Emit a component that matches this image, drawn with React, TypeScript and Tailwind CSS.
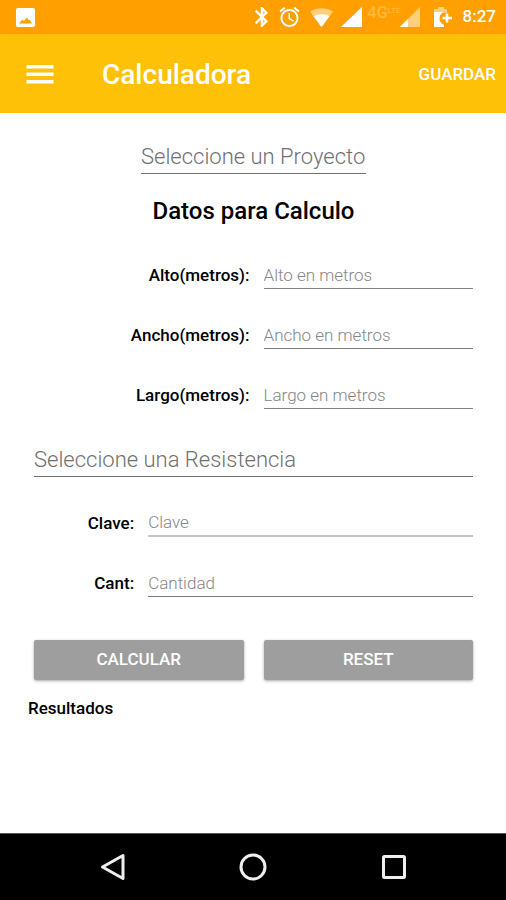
import { useState, type ReactNode } from "react";

interface FieldProps {
  id: string;
  label: string;
  placeholder: string;
  wide?: boolean;
  disabled?: boolean;
  value: string;
  onChange: (id: string, value: string) => void;
}

const Field = ({
  id,
  label,
  placeholder,
  wide,
  disabled,
  value,
  onChange,
}: FieldProps) => (
  <div className="flex items-center gap-3.5">
    <label
      htmlFor={id}
      className="flex-1 text-right text-[17px] leading-6 font-medium text-black"
    >
      {label}
    </label>
    <input
      id={id}
      value={value}
      disabled={disabled}
      placeholder={placeholder}
      onChange={(e) => onChange(id, e.target.value)}
      className={`h-7 min-w-0 bg-transparent text-[17px] leading-6 font-light text-black outline-none placeholder:text-[#868686] ${
        wide ? "w-[74%]" : "w-[calc(50%-10px)]"
      } ${disabled ? "border-b-2 border-[#c4c4c4]" : "border-b border-[#808080]"}`}
    />
  </div>
);

interface PickerProps {
  label: string;
  options: string[];
  className: string;
}

const Picker = ({ label, options, className }: PickerProps) => (
  <select
    aria-label={label}
    defaultValue=""
    className={`h-[33px] appearance-none border-b border-[#707070] bg-transparent text-[22px] leading-8 font-light text-[#707070] outline-none ${className}`}
  >
    <option value="" hidden>
      {label}
    </option>
    {options.map((option) => (
      <option key={option}>{option}</option>
    ))}
  </select>
);

interface ButtonProps {
  children: ReactNode;
  onClick?: () => void;
}

const Button = ({ children, onClick }: ButtonProps) => (
  <button
    type="button"
    onClick={onClick}
    className="h-10 flex-1 rounded-xs bg-[#9e9e9e] text-[17px] font-medium text-white shadow-[0_1px_3px_rgba(0,0,0,0.35)]"
  >
    {children}
  </button>
);

const StatusBar = () => (
  <div className="flex h-[34px] items-center bg-[#ffa000] pr-2.5 pl-4 text-white">
    <svg width="19" height="19" viewBox="0 0 19 19" fill="currentColor">
      <path
        fillRule="evenodd"
        d="M2 0h15a2 2 0 0 1 2 2v15a2 2 0 0 1-2 2H2a2 2 0 0 1-2-2V2a2 2 0 0 1 2-2zM3 15.500h13l-2.500-4-1 .5-1.500-2.500-3 3.500-1.500-1.500z"
      />
    </svg>
    <div className="ml-auto flex items-center">
      <svg width="14" height="20" viewBox="5 2 14 20" fill="currentColor">
        <path
          stroke="currentColor"
          strokeWidth="0.5"
          d="M17.710 7.710L12 2h-1v7.590L6.410 5 5 6.410 10.590 12 5 17.590 6.410 19 11 14.410V22h1l5.710-5.710-4.300-4.290 4.300-4.290zM13 5.830l1.880 1.880L13 9.590V5.830zm1.880 10.460L13 18.170v-3.760l1.880 1.880z"
        />
      </svg>
      <svg
        className="ml-2.5"
        width="21"
        height="20"
        viewBox="2 2 20 20"
        fill="currentColor"
      >
        <path d="M22 5.720l-4.600-3.860-1.290 1.530 4.600 3.860L22 5.720zM7.880 3.390L6.600 1.860 2 5.710l1.290 1.530 4.590-3.850zM12.500 8H11v6l4.750 2.850.75-1.230-4-2.370V8zM12 4c-4.970 0-9 4.030-9 9s4.020 9 9 9c4.970 0 9-4.030 9-9s-4.030-9-9-9zm0 16c-3.870 0-7-3.130-7-7s3.130-7 7-7 7 3.130 7 7-3.130 7-7 7z" />
      </svg>
      <svg className="ml-2.5" width="23" height="19" viewBox="0 0 23 19">
        <path
          fill="#ffcf7d"
          d="M0 3.500C6.500-1 16.500-1 23 3.500L11.500 19z"
        />
        <path fill="#fff" d="M3.500 8.200C8 5.500 15 5.500 19.500 8.200L11.500 19z" />
      </svg>
      <svg className="ml-2" width="21" height="20" viewBox="0 0 21 20">
        <path fill="#fff" d="M21 0v20H0z" />
      </svg>
      <span className="ml-1.5 flex w-8 pb-2 text-base leading-4 font-medium text-[#ffb840]">
        4G
        <span className="text-[8px] leading-3">LTE</span>
      </span>
      <svg width="20" height="20" viewBox="0 0 20 20">
        <path fill="#ffcf7d" d="M20 0v20H0z" />
        <path fill="#fff" d="M8 12v8H0z" />
      </svg>
      <svg className="ml-3.5" width="19" height="20" viewBox="0 0 19 20">
        <path fill="#ffcf7d" d="M4 2V0h6v2h3v4H0V2z" />
        <path
          fill="#fff"
          d="M0 5h9.500c-2.500 1.500-4 3.500-4 6.500s1.500 5 4.500 6.500v2H1a1 1 0 0 1-1-1z"
        />
        <path
          d="M13 6.500v9M8.500 11h9.500"
          stroke="#fff"
          strokeWidth="2.500"
          fill="none"
        />
      </svg>
      <span className="ml-2.5 text-[17px] font-medium">8:27</span>
    </div>
  </div>
);

const NavBar = () => (
  <nav className="flex h-[67px] items-center justify-around border-t border-[#555] bg-black px-[42px] text-[#eee]">
    <button type="button" aria-label="Atrás">
      <svg width="28" height="28" viewBox="0 0 28 28" fill="none">
        <path
          d="M25 2.500v23L4.500 14z"
          stroke="currentColor"
          strokeWidth="3"
          strokeLinejoin="round"
        />
      </svg>
    </button>
    <button type="button" aria-label="Inicio">
      <svg width="28" height="28" viewBox="0 0 28 28" fill="none">
        <circle cx="14" cy="14" r="12" stroke="currentColor" strokeWidth="3" />
      </svg>
    </button>
    <button type="button" aria-label="Recientes">
      <svg width="28" height="28" viewBox="0 0 28 28" fill="none">
        <rect
          x="3.500"
          y="3.500"
          width="21"
          height="21"
          rx="1"
          stroke="currentColor"
          strokeWidth="3"
        />
      </svg>
    </button>
  </nav>
);

const emptyValues: Record<string, string> = {
  alto: "",
  ancho: "",
  largo: "",
  clave: "",
  cantidad: "",
};

const App = () => {
  const [values, setValues] = useState(emptyValues);

  const handleChange = (id: string, value: string) => {
    setValues((prev) => ({ ...prev, [id]: value }));
  };

  const fieldProps = (id: string) => ({
    id,
    value: values[id],
    onChange: handleChange,
  });

  return (
    <div className="flex min-h-screen flex-col bg-white font-[Roboto,sans-serif]">
      <StatusBar />
      <header className="flex h-[79px] items-center bg-[#ffc107] pt-0.5 pr-2.5 pl-[26px] text-white">
        <button type="button" aria-label="Menú">
          <svg width="28" height="20" viewBox="0 0 28 20" fill="currentColor">
            <path d="M0.500 0h27v3.500h-27zM0.500 7.500h27v3.500h-27zM0.500 15h27v3.500h-27z" />
          </svg>
        </button>
        <h1 className="ml-12 text-[28px] font-medium">Calculadora</h1>
        <button type="button" className="ml-auto text-[17px] font-medium">
          GUARDAR
        </button>
      </header>

      <main className="flex flex-1 flex-col pt-7 pr-[33px] pl-[34px]">
        <Picker
          label="Seleccione un Proyecto"
          options={["Proyecto 1", "Proyecto 2"]}
          className="self-center"
        />
        <h2 className="mt-[23px] text-center text-2xl leading-7 font-medium text-black">
          Datos para Calculo
        </h2>

        <div className="mt-9 flex flex-col gap-8">
          <Field
            {...fieldProps("alto")}
            label="Alto(metros):"
            placeholder="Alto en metros"
          />
          <Field
            {...fieldProps("ancho")}
            label="Ancho(metros):"
            placeholder="Ancho en metros"
          />
          <Field
            {...fieldProps("largo")}
            label="Largo(metros):"
            placeholder="Largo en metros"
          />
        </div>

        <Picker
          label="Seleccione una Resistencia"
          options={["150 kg/cm²", "200 kg/cm²", "250 kg/cm²"]}
          className="mt-[35px] w-full"
        />

        <div className="mt-8 flex flex-col gap-8">
          <Field
            {...fieldProps("clave")}
            label="Clave:"
            placeholder="Clave"
            wide
            disabled
          />
          <Field
            {...fieldProps("cantidad")}
            label="Cant:"
            placeholder="Cantidad"
            wide
          />
        </div>

        <div className="mt-[43px] flex gap-5">
          <Button>CALCULAR</Button>
          <Button onClick={() => setValues(emptyValues)}>RESET</Button>
        </div>
        <h3 className="mt-4 -ml-1.5 text-[17px] leading-6 font-medium text-black">
          Resultados
        </h3>
      </main>

      <NavBar />
    </div>
  );
};

export default App;
